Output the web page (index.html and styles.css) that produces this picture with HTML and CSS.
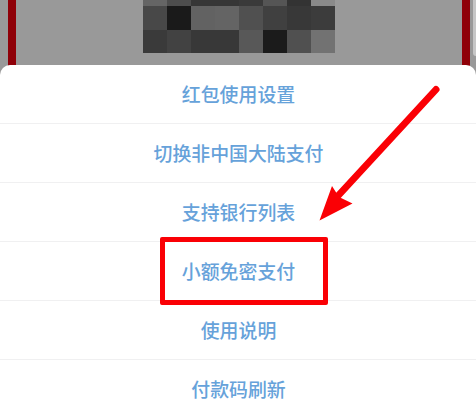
FILE: index.html
```html
<!DOCTYPE html>
<html lang="zh-CN">
<head>
<meta charset="utf-8">
<title>付款码设置</title>
<link rel="stylesheet" href="styles.css">
</head>
<body>
<div class="screen">
  <header class="backdrop">
    <span class="rail"></span>
    <div class="mosaic">
      <i class="c65"></i><i class="c4d"></i><i class="c36"></i><i class="c36"></i><i class="c3a"></i><i class="c55"></i><i class="c33"></i><i class="c8a"></i>
      <i class="c48"></i><i class="c1a"></i><i class="c62"></i><i class="c64"></i><i class="c50"></i><i class="c40"></i><i class="c38"></i><i class="c3c"></i>
      <i class="c3a"></i><i class="c42"></i><i class="c38"></i><i class="c38"></i><i class="c58"></i><i class="c1b"></i><i class="c50"></i><i class="c72"></i>
    </div>
    <span class="rail"></span>
    <span class="edge"></span>
  </header>
  <ul class="sheet">
    <li class="row">红包使用设置</li>
    <li class="row">切换非中国大陆支付</li>
    <li class="row">支持银行列表</li>
    <li class="row">小额免密支付</li>
    <li class="row">使用说明</li>
    <li class="row">付款码刷新</li>
  </ul>
  <div class="highlight"></div>
  <svg class="arrow" viewBox="0 0 476 410" width="476" height="410" aria-hidden="true">
    <path class="shaft" d="M436 89.500L336 198"/>
    <path class="head" d="M319.500 220.500L332 186L339 197L352.500 203.500Z"/>
  </svg>
</div>
</body>
</html>
```

FILE: styles.css
```css
* {
  box-sizing: border-box;
}

html,
body {
  margin: 0;
  padding: 0;
  background: #fff;
}

.screen {
  position: relative;
  width: 476px;
  height: 410px;
  overflow: hidden;
  display: flex;
  flex-direction: column;
  font-family: "Noto Sans CJK SC", "Noto Sans", sans-serif;
}

.backdrop {
  position: relative;
  flex: 0 0 78px;
  margin-bottom: -13px;
  padding: 0 6px 0 8px;
  display: flex;
  justify-content: space-between;
  align-items: flex-start;
  background: #999;
}

.rail {
  width: 8px;
  height: 78px;
  background: #8f0008;
}

.edge {
  position: absolute;
  top: 0;
  right: 0;
  width: 3px;
  height: 56px;
  background: #c6c6c6;
  border-bottom-left-radius: 3px;
}

.mosaic {
  display: grid;
  grid-template-columns: repeat(8, 24px);
  grid-template-rows: 6px 24px 23px;
}

.c1a { background: #1a1a1a; }
.c1b { background: #1b1b1b; }
.c33 { background: #333; }
.c36 { background: #363636; }
.c38 { background: #383838; }
.c3a { background: #3a3a3a; }
.c3c { background: #3c3c3c; }
.c40 { background: #404040; }
.c42 { background: #424242; }
.c48 { background: #484848; }
.c4d { background: #4d4d4d; }
.c50 { background: #505050; }
.c55 { background: #555; }
.c58 { background: #585858; }
.c62 { background: #626262; }
.c64 { background: #646464; }
.c65 { background: #656565; }
.c72 { background: #727272; }
.c8a { background: #8a8a8a; }

.sheet {
  position: relative;
  flex: 1;
  margin: 0;
  padding: 0;
  list-style: none;
  background: #fff;
  border-radius: 10px 10px 0 0;
}

.row {
  height: 59px;
  padding-left: 1px;
  display: flex;
  align-items: center;
  justify-content: center;
  border-bottom: 1px solid #f0f0f1;
  font-size: 18.900px;
  font-weight: 500;
  line-height: 1;
  color: #66a2da;
}

.highlight {
  position: absolute;
  left: 160px;
  top: 237px;
  width: 168px;
  height: 68px;
  border: 5px solid #fa0005;
  border-radius: 2px;
}

.arrow {
  position: absolute;
  left: 0;
  top: 0;
}

.shaft {
  fill: none;
  stroke: #fa0005;
  stroke-width: 7px;
  stroke-linecap: round;
}

.head {
  fill: #fa0005;
}
```
